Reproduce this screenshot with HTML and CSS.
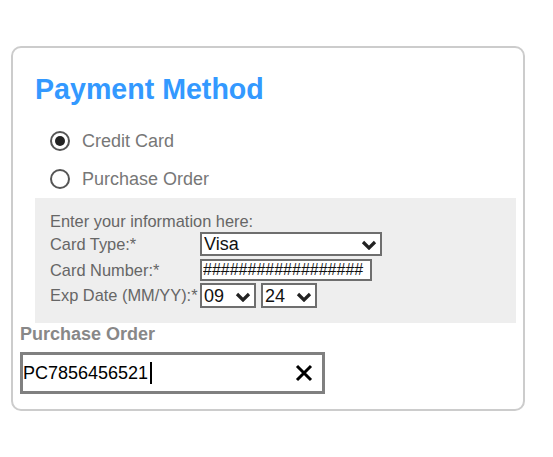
FILE: index.html
```html
<!DOCTYPE html>
<html lang="en">
<head>
    <meta charset="UTF-8">
    <meta name="viewport" content="width=device-width, initial-scale=1.0">
    <title>Payment Method</title>
    <link rel="stylesheet" href="styles.css">
</head>
<body>
    <div class="card">
        <div class="section">
            <h1>Payment Method</h1>
            <div class="radios">
                <label class="radio-row">
                    <span class="radio checked"></span>
                    <span>Credit Card</span>
                </label>
                <label class="radio-row">
                    <span class="radio"></span>
                    <span>Purchase Order</span>
                </label>
            </div>
            <div class="panel">
                <div class="intro">Enter your information here:</div>
                <div class="row row-type">
                    <span class="label">Card Type:*</span>
                    <span class="select-wrap">
                        <select class="control select-type" aria-label="Card Type">
                            <option>Visa</option>
                        </select>
                        <svg class="chevron" width="16" height="10" viewBox="0 0 16 10"><path d="M2 2 L8 8 L14 2" fill="none" stroke="#222" stroke-width="3.2"/></svg>
                    </span>
                </div>
                <div class="row row-number">
                    <span class="label">Card Number:*</span>
                    <input class="control input-number" type="text" value="##################" aria-label="Card Number">
                </div>
                <div class="row row-exp">
                    <span class="label">Exp Date (MM/YY):*</span>
                    <span class="select-wrap">
                        <select class="control select-small" aria-label="Month">
                            <option>09</option>
                        </select>
                        <svg class="chevron" width="16" height="10" viewBox="0 0 16 10"><path d="M2 2 L8 8 L14 2" fill="none" stroke="#222" stroke-width="3.2"/></svg>
                    </span>
                    <span class="select-wrap year">
                        <select class="control select-small" aria-label="Year">
                            <option>24</option>
                        </select>
                        <svg class="chevron" width="16" height="10" viewBox="0 0 16 10"><path d="M2 2 L8 8 L14 2" fill="none" stroke="#222" stroke-width="3.2"/></svg>
                    </span>
                </div>
            </div>
        </div>
        <div class="po-label">Purchase Order</div>
        <div class="po-input">
            <span class="po-text">PC7856456521</span>
            <span class="caret"></span>
            <svg class="clear" width="18" height="18" viewBox="0 0 18 18"><path d="M2 2 L16 16 M16 2 L2 16" stroke="#000" stroke-width="3" fill="none"/></svg>
        </div>
    </div>
</body>
</html>
```

FILE: styles.css
```css
body {
    margin: 0;
    font-family: "Liberation Sans", Arial, sans-serif;
    background-color: #fff;
}
.card {
    margin: 46px 0 0 11px;
    width: 514px;
    height: 365px;
    box-sizing: border-box;
    border: 2px solid #ccc;
    border-radius: 10px;
    padding: 0 7px 14px;
}
.section {
    margin-left: 15px;
}
h1 {
    margin: 25px 0 0;
    font-size: 28.6px;
    line-height: 32px;
    font-weight: bold;
    color: #3399ff;
}
.radios {
    margin-top: 17px;
}
.radio-row {
    display: flex;
    align-items: center;
    height: 38px;
    padding-left: 15px;
    font-size: 18px;
    color: #777;
}
.radio {
    width: 20px;
    height: 20px;
    box-sizing: border-box;
    border: 2px solid #555;
    border-radius: 50%;
    margin-right: 12px;
    display: flex;
    align-items: center;
    justify-content: center;
}
.radio.checked::after {
    content: "";
    width: 10px;
    height: 10px;
    border-radius: 50%;
    background-color: #222;
}
.panel {
    background-color: #eee;
    padding: 14px 15px 15px 15px;
    color: #666;
    font-size: 16.4px;
}
.intro {
    line-height: 18px;
}
.row {
    display: flex;
    align-items: center;
}
.row-type {
    margin-top: 2px;
    height: 24px;
}
.row-number {
    margin-top: 3px;
    height: 22px;
}
.row-exp {
    margin-top: 2px;
    height: 25px;
}
.label {
    min-width: 150px;
    white-space: nowrap;
}
.control {
    box-sizing: border-box;
    border: 2px solid #6e6e6e;
    border-radius: 0;
    background-color: #fff;
    font-family: "Liberation Sans", Arial, sans-serif;
    font-size: 18px;
    color: #111;
    padding: 0 2px;
    margin: 0;
    appearance: none;
    -webkit-appearance: none;
    outline: none;
}
.select-wrap {
    position: relative;
    display: inline-flex;
}
.select-wrap.year {
    margin-left: 5px;
}
.chevron {
    position: absolute;
    right: 5px;
    top: 50%;
    margin-top: -4px;
    pointer-events: none;
}
.select-type {
    width: 182px;
    height: 24px;
}
.input-number {
    width: 172px;
    height: 22px;
    font-size: 16px;
    padding: 0 1px;
}
.select-small {
    width: 56px;
    height: 25px;
}
.po-label {
    font-size: 18px;
    font-weight: bold;
    color: #888;
    line-height: 22px;
}
.po-input {
    margin-top: 7px;
    width: 305px;
    height: 42px;
    box-sizing: border-box;
    border: 3px solid #808080;
    display: flex;
    align-items: center;
    padding: 0 9px 0 0;
    font-size: 18px;
    color: #000;
}
.caret {
    width: 2px;
    height: 22px;
    background-color: #000;
    margin-left: 2px;
}
.clear {
    margin-left: auto;
}
```
